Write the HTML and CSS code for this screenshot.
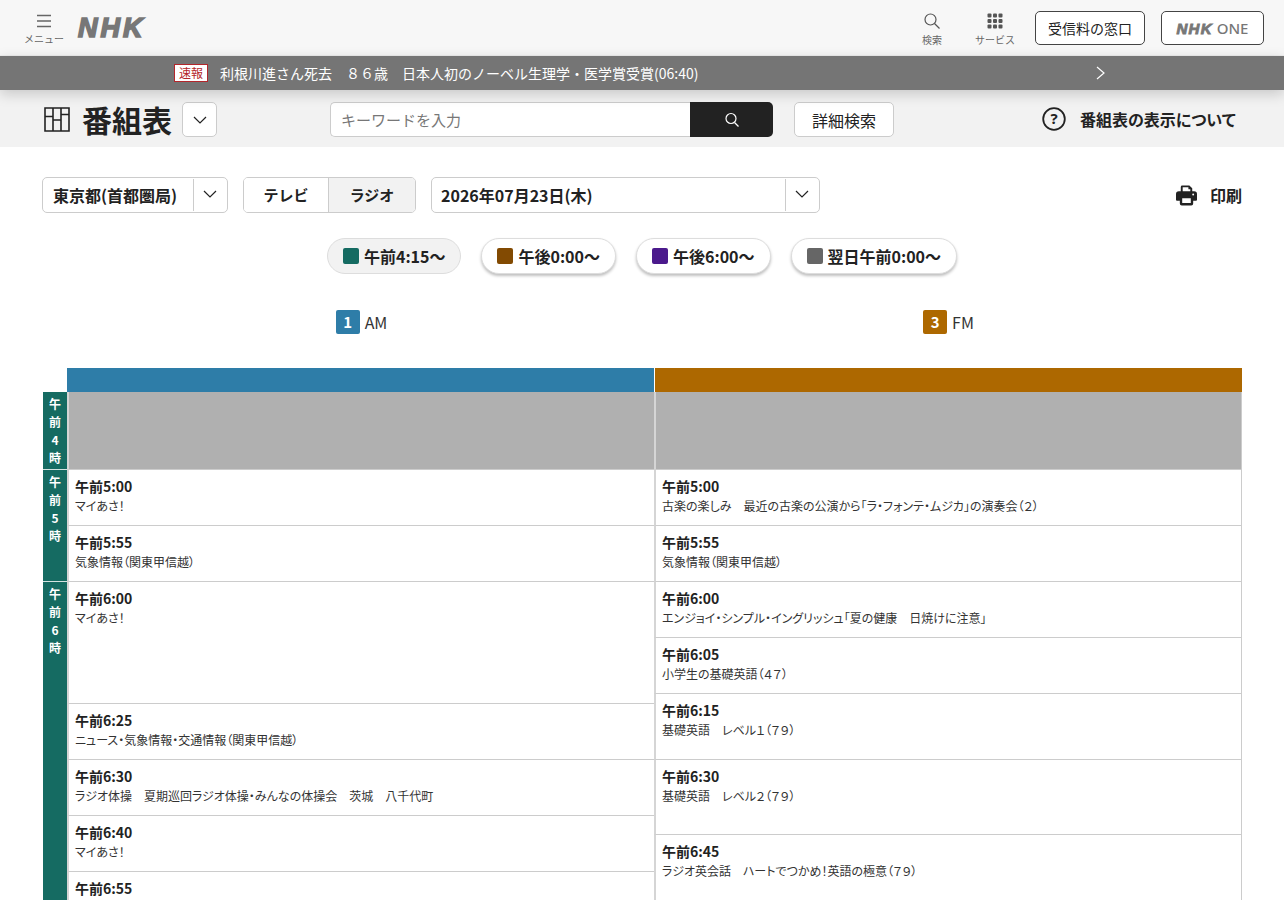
FILE: index.html
```html
<!DOCTYPE html>
<html lang="ja">

<head>
    <meta charset="UTF-8">
    <meta name="viewport" content="width=device-width, initial-scale=1.0">
    <title>NHK 番組表</title>
    <link rel="stylesheet" href="styles.css">
</head>

<body>
    <header class="site-header">
        <a class="menu-btn">
            <svg class="menu-icon" width="16" height="14" viewBox="0 0 16 14">
                <path d="M1 1.5h14M1 7h14M1 12.5h14" stroke="#666" stroke-width="1.3" fill="none" />
            </svg>
            <span class="tool-label">メニュー</span>
        </a>
        <span class="nhk-logo">NHK</span>

        <div class="header-tools">
            <a class="tool-btn tool-search">
                <svg width="16" height="16" viewBox="0 0 16 16">
                    <circle cx="6.5" cy="6.500" r="5.500" stroke="#555" stroke-width="1.200" fill="none" />
                    <path d="M10.500 10.500l5 5" stroke="#555" stroke-width="1.200" fill="none" />
                </svg>
                <span class="tool-label">検索</span>
            </a>
            <a class="tool-btn tool-service">
                <svg width="16" height="16" viewBox="0 0 16 16" fill="#555">
                    <rect x="0.5" y="0.5" width="4" height="4" rx="1" />
                    <rect x="6" y="0.5" width="4" height="4" rx="1" />
                    <rect x="11.5" y="0.5" width="4" height="4" rx="1" />
                    <rect x="0.5" y="6" width="4" height="4" rx="1" />
                    <rect x="6" y="6" width="4" height="4" rx="1" />
                    <rect x="11.5" y="6" width="4" height="4" rx="1" />
                    <rect x="0.5" y="11.5" width="4" height="4" rx="1" />
                    <rect x="6" y="11.5" width="4" height="4" rx="1" />
                    <rect x="11.5" y="11.5" width="4" height="4" rx="1" />
                </svg>
                <span class="tool-label">サービス</span>
            </a>
            <a class="outline-btn fee-btn">受信料の窓口</a>
            <a class="outline-btn one-btn"><span class="one-mark">NHK</span><span class="one-text">ONE</span></a>
        </div>
    </header>

    <div class="news-bar">
        <span class="news-tag">速報</span>
        <span class="news-text">利根川進さん死去　８６歳　日本人初のノーベル生理学・医学賞受賞(06:40)</span>
        <svg class="news-arrow" width="9" height="14" viewBox="0 0 9 14">
            <path d="M1 1l7 6-7 6" stroke="#fff" stroke-width="1.2" fill="none" />
        </svg>
    </div>

    <section class="title-band">
        <div class="title-left">
            <svg class="title-icon" width="26" height="25" viewBox="0 0 26 25">
                <path d="M1 1h24v23H1zM9 1v23M17 1v23M1 9.500h8M9 13h8M17 7.500h8" stroke="#222" stroke-width="1.600" fill="none" />
            </svg>
            <h1 class="page-title">番組表</h1>
            <button class="title-drop">
                <svg width="14" height="8" viewBox="0 0 14 8">
                    <path d="M1 1l6 6 6-6" stroke="#222" stroke-width="1.2" fill="none" />
                </svg>
            </button>
        </div>
        <div class="search-box">
            <div class="search-input">キーワードを入力</div>
            <button class="search-btn">
                <svg width="16" height="16" viewBox="0 0 16 16">
                    <circle cx="7" cy="6.500" r="5" stroke="#fff" stroke-width="1.200" fill="none" />
                    <path d="M10.500 10.500l4 4" stroke="#fff" stroke-width="1.200" fill="none" />
                </svg>
            </button>
        </div>
        <button class="detail-btn">詳細検索</button>
        <a class="about-link">
            <svg width="24" height="24" viewBox="0 0 24 24">
                <circle cx="12" cy="12" r="10.800" stroke="#222" stroke-width="1.800" fill="none" />
                <text x="12" y="17" text-anchor="middle" class="about-mark">?</text>
            </svg>
            <span>番組表の表示について</span>
        </a>
    </section>

    <main class="content">
        <div class="filter-row">
            <div class="select-box area-select">
                <span class="select-value">東京都(首都圏局)</span>
                <span class="select-arrow">
                    <svg width="14" height="8" viewBox="0 0 14 8">
                        <path d="M1 1l6 6 6-6" stroke="#222" stroke-width="1.200" fill="none" />
                    </svg>
                </span>
            </div>
            <div class="media-tabs">
                <a class="media-tab">テレビ</a>
                <a class="media-tab is-active">ラジオ</a>
            </div>
            <div class="select-box date-select">
                <span class="select-value">2026年07月23日(木)</span>
                <span class="select-arrow">
                    <svg width="14" height="8" viewBox="0 0 14 8">
                        <path d="M1 1l6 6 6-6" stroke="#222" stroke-width="1.200" fill="none" />
                    </svg>
                </span>
            </div>
            <a class="print-link">
                <svg width="21" height="22" viewBox="0 0 22 22" fill="#222">
                    <path d="M5 8V2.500A1.500 1.500 0 0 1 6.500 1H14l3 3v4h-2V5h-2V3H7v5z" />
                    <path d="M3 7h16a3 3 0 0 1 3 3v6a1 1 0 0 1-1 1h-3v3a2 2 0 0 1-2 2H6a2 2 0 0 1-2-2v-3H1a1 1 0 0 1-1-1v-6a3 3 0 0 1 3-3zM6.500 14.500v5h9v-5z" fill-rule="evenodd" />
                    <circle cx="18" cy="10.500" r="1" fill="#fff" />
                </svg>
                <span>印刷</span>
            </a>
        </div>

        <div class="time-jumps">
            <a class="jump-btn is-current"><i class="swatch swatch-morning"></i>午前4:15〜</a>
            <a class="jump-btn"><i class="swatch swatch-noon"></i>午後0:00〜</a>
            <a class="jump-btn"><i class="swatch swatch-evening"></i>午後6:00〜</a>
            <a class="jump-btn"><i class="swatch swatch-night"></i>翌日午前0:00〜</a>
        </div>

        <div class="channel-names">
            <div class="channel-name"><span class="channel-num num-am">1</span>AM</div>
            <div class="channel-name"><span class="channel-num num-fm">3</span>FM</div>
        </div>

        <div class="schedule">
            <div class="hour-col">
                <div class="hour-cell" style="height: 78px">午<br>前<br>4<br>時</div>
                <div class="hour-cell" style="height: 112px">午<br>前<br>5<br>時</div>
                <div class="hour-cell" style="height: 400px">午<br>前<br>6<br>時</div>
            </div>

            <div class="channel-col col-am">
                <div class="channel-head head-am"></div>
                <div class="off-air"></div>
                <div class="program" style="height: 56px"><b>午前5:00</b><p>マイあさ！</p></div>
                <div class="program" style="height: 56px"><b>午前5:55</b><p>気象情報（関東甲信越）</p></div>
                <div class="program" style="height: 122px"><b>午前6:00</b><p>マイあさ！</p></div>
                <div class="program" style="height: 56px"><b>午前6:25</b><p>ニュース・気象情報・交通情報（関東甲信越）</p></div>
                <div class="program" style="height: 56px"><b>午前6:30</b><p>ラジオ体操　夏期巡回ラジオ体操・みんなの体操会　茨城　八千代町</p></div>
                <div class="program" style="height: 56px"><b>午前6:40</b><p>マイあさ！</p></div>
                <div class="program" style="height: 56px"><b>午前6:55</b></div>
            </div>

            <div class="channel-col col-fm">
                <div class="channel-head head-fm"></div>
                <div class="off-air"></div>
                <div class="program" style="height: 56px"><b>午前5:00</b><p>古楽の楽しみ　最近の古楽の公演から「ラ・フォンテ・ムジカ」の演奏会（２）</p></div>
                <div class="program" style="height: 56px"><b>午前5:55</b><p>気象情報（関東甲信越）</p></div>
                <div class="program" style="height: 56px"><b>午前6:00</b><p>エンジョイ・シンプル・イングリッシュ「夏の健康　日焼けに注意」</p></div>
                <div class="program" style="height: 56px"><b>午前6:05</b><p>小学生の基礎英語（４７）</p></div>
                <div class="program" style="height: 66px"><b>午前6:15</b><p>基礎英語　レベル１（７９）</p></div>
                <div class="program" style="height: 75px"><b>午前6:30</b><p>基礎英語　レベル２（７９）</p></div>
                <div class="program" style="height: 75px"><b>午前6:45</b><p>ラジオ英会話　ハートでつかめ！英語の極意（７９）</p></div>
            </div>
        </div>
    </main>
</body>

</html>
```

FILE: styles.css
```css
* {
    margin: 0;
    padding: 0;
    box-sizing: border-box;
}

html,
body {
    height: 900px;
    overflow: hidden;
}

body {
    font-family: "Noto Sans CJK JP", "Noto Sans", sans-serif;
    background: #fff;
    color: #222;
}

button {
    font-family: inherit;
    color: inherit;
    cursor: pointer;
}

/* header */
.site-header {
    height: 56px;
    display: flex;
    align-items: flex-start;
    background: #f7f7f7;
    border-bottom: 1px solid #eee;
}

.menu-btn {
    width: 40px;
    margin-left: 24px;
    padding-top: 14px;
    display: flex;
    flex-direction: column;
    align-items: center;
}

.menu-icon {
    margin-bottom: 5px;
}

.tool-label {
    font-size: 10px;
    line-height: 12px;
    color: #666;
    white-space: nowrap;
}

.nhk-logo {
    margin: 10px 0 0 14px;
    font-family: "Liberation Sans", sans-serif;
    font-size: 27px;
    line-height: 36px;
    font-weight: 700;
    font-style: italic;
    letter-spacing: 3px;
    color: #777;
    -webkit-text-stroke: 1.6px #777;
}

.header-tools {
    margin-left: auto;
    margin-right: 20px;
    display: flex;
    align-items: flex-start;
}

.tool-btn {
    display: flex;
    flex-direction: column;
    align-items: center;
    padding-top: 13px;
    gap: 5px;
}

.tool-search {
    margin-right: 33px;
}

.tool-service {
    margin-right: 20px;
}

.outline-btn {
    height: 34px;
    margin-top: 11px;
    display: flex;
    align-items: center;
    justify-content: center;
    background: #fff;
    border: 1px solid #444;
    border-radius: 5px;
}

.fee-btn {
    width: 110px;
    font-size: 14px;
    margin-right: 16px;
}

.one-btn {
    width: 103px;
    gap: 4px;
    color: #777;
}

.one-mark {
    font-family: "Liberation Sans", sans-serif;
    font-size: 15px;
    font-weight: 700;
    font-style: italic;
    letter-spacing: 1.2px;
    -webkit-text-stroke: 0.9px #777;
}

.one-text {
    font-family: "Noto Sans", sans-serif;
    font-size: 15px;
    font-weight: 500;
}

/* news */
.news-bar {
    position: relative;
    height: 34px;
    display: flex;
    align-items: center;
    padding-left: 174px;
    background: #757575;
    color: #fff;
    font-size: 14px;
    box-shadow: 0 4px 14px rgba(0, 0, 0, 0.18);
}

.news-tag {
    width: 34px;
    height: 18px;
    margin-right: 12px;
    background: #fff;
    border: 1px solid #b3262b;
    color: #b3262b;
    font-size: 12px;
    line-height: 16px;
    text-align: center;
}

.news-arrow {
    position: absolute;
    left: 1096px;
    top: 10px;
}

/* title band */
.title-band {
    height: 57px;
    display: flex;
    align-items: flex-start;
    padding-top: 12px;
    background: #f2f2f2;
}

.title-left {
    width: 330px;
    height: 35px;
    padding-left: 44px;
    display: flex;
    align-items: center;
}

.title-icon {
    margin-right: 12px;
}

.page-title {
    font-size: 30px;
    line-height: 36px;
    font-weight: 700;
    margin-right: 10px;
    padding-bottom: 2px;
}

.title-drop {
    width: 35px;
    height: 35px;
    display: flex;
    align-items: center;
    justify-content: center;
    background: #fff;
    border: 1px solid #ccc;
    border-radius: 5px;
}

.search-box {
    width: 443px;
    height: 35px;
    display: flex;
}

.search-input {
    flex: 1;
    padding-left: 10px;
    font-size: 15px;
    line-height: 33px;
    color: #777;
    background: #fff;
    border: 1px solid #ccc;
    border-right: none;
    border-radius: 5px 0 0 5px;
}

.search-btn {
    width: 83px;
    display: flex;
    align-items: center;
    justify-content: center;
    background: #222;
    border: none;
    border-radius: 0 5px 5px 0;
}

.detail-btn {
    width: 100px;
    height: 35px;
    margin-left: 21px;
    background: #fff;
    border: 1px solid #ccc;
    border-radius: 5px;
    font-size: 16px;
}

.about-link {
    height: 35px;
    margin-left: 148px;
    padding-bottom: 2px;
    display: flex;
    align-items: center;
    gap: 14px;
    font-size: 16px;
    font-weight: 700;
    font-feature-settings: "palt";
}

.about-mark {
    font-family: "Noto Sans", sans-serif;
    font-size: 15px;
    font-weight: 700;
    fill: #222;
}

/* filters */
.content {
    padding: 30px 42px 0;
}

.filter-row {
    display: flex;
    align-items: center;
    height: 36px;
}

.select-box {
    height: 36px;
    display: flex;
    background: #fff;
    border: 1px solid #ccc;
    border-radius: 5px;
    font-size: 16px;
    font-weight: 700;
}

.select-value {
    flex: 1;
    padding-left: 10px;
    line-height: 34px;
}

.date-select .select-value {
    padding-left: 9px;
}

.select-arrow {
    width: 34px;
    margin: 1px 0;
    padding: 0 1px 2px 0;
    display: flex;
    align-items: center;
    justify-content: center;
    border-left: 1px solid #ccc;
}

.area-select {
    width: 186px;
}

.date-select {
    width: 389px;
}

.media-tabs {
    width: 173px;
    height: 36px;
    margin: 0 15px;
    display: flex;
    border: 1px solid #ccc;
    border-radius: 5px;
    overflow: hidden;
    font-size: 15px;
    font-weight: 700;
}

.media-tab {
    width: 84px;
    text-align: center;
    line-height: 34px;
    background: #fff;
}

.media-tab.is-active {
    flex: 1;
    background: #f2f2f2;
    border-left: 1px solid #ccc;
}

.print-link {
    margin-left: auto;
    display: flex;
    align-items: center;
    gap: 13px;
    font-size: 16px;
    font-weight: 700;
}

/* time jump buttons */
.time-jumps {
    margin-top: 25px;
    display: flex;
    justify-content: center;
    gap: 20px;
}

.jump-btn {
    height: 36px;
    display: flex;
    align-items: center;
    padding: 0 15px;
    background: #fff;
    border: 1px solid #ddd;
    border-radius: 18px;
    box-shadow: 0 2px 3px rgba(0, 0, 0, 0.25);
    font-size: 16px;
    font-weight: 700;
    white-space: nowrap;
}

.jump-btn.is-current {
    background: #f2f2f2;
    box-shadow: none;
}

.swatch {
    width: 16px;
    height: 16px;
    margin-right: 5px;
    border-radius: 2px;
}

.swatch-morning {
    background: #156b62;
}

.swatch-noon {
    background: #824a02;
}

.swatch-evening {
    background: #4b1a8c;
}

.swatch-night {
    background: #666;
}

/* channels */
.channel-names {
    margin-top: 36px;
    padding-left: 26px;
    display: flex;
}

.channel-name {
    flex: 1;
    display: flex;
    justify-content: center;
    align-items: center;
    gap: 5px;
    height: 24px;
    font-size: 16px;
    color: #333;
}

.channel-num {
    width: 24px;
    height: 24px;
    border-radius: 2px;
    color: #fff;
    font-size: 15px;
    font-weight: 700;
    line-height: 24px;
    text-align: center;
}

.num-am {
    background: #2e7da8;
}

.num-fm {
    background: #ad6800;
}

/* schedule */
.schedule {
    margin-top: 34px;
    margin-left: 1px;
    display: flex;
    align-items: flex-start;
}

.hour-col {
    width: 24px;
    margin-top: 24px;
}

.hour-cell {
    padding-top: 3px;
    background: #156b62;
    border-bottom: 1px solid #d5e3e1;
    color: #fff;
    font-size: 12px;
    font-weight: 700;
    line-height: 18px;
    text-align: center;
}

.col-am {
    flex: 0 0 587px;
}

.col-fm {
    flex: 0 0 588px;
}

.channel-head {
    height: 24px;
}

.head-am {
    background: #2e7da8;
}

.head-fm {
    margin-left: 1px;
    background: #ad6800;
}

.off-air {
    height: 78px;
    background: #b0b0b0;
    border-left: 2px solid #d5d5d5;
    border-bottom: 1px solid #ccc;
}

.program {
    padding: 6px 0 0 6px;
    border-left: 2px solid #d5d5d5;
    border-bottom: 1px solid #ccc;
    background: #fff;
    overflow: hidden;
}

.col-fm .off-air,
.col-fm .program {
    border-right: 1px solid #ccc;
}

.program b {
    display: block;
    font-size: 14px;
    line-height: 21px;
    font-weight: 700;
}

.program p {
    font-size: 12px;
    line-height: 18px;
    color: #333;
    font-feature-settings: "palt";
}
```
